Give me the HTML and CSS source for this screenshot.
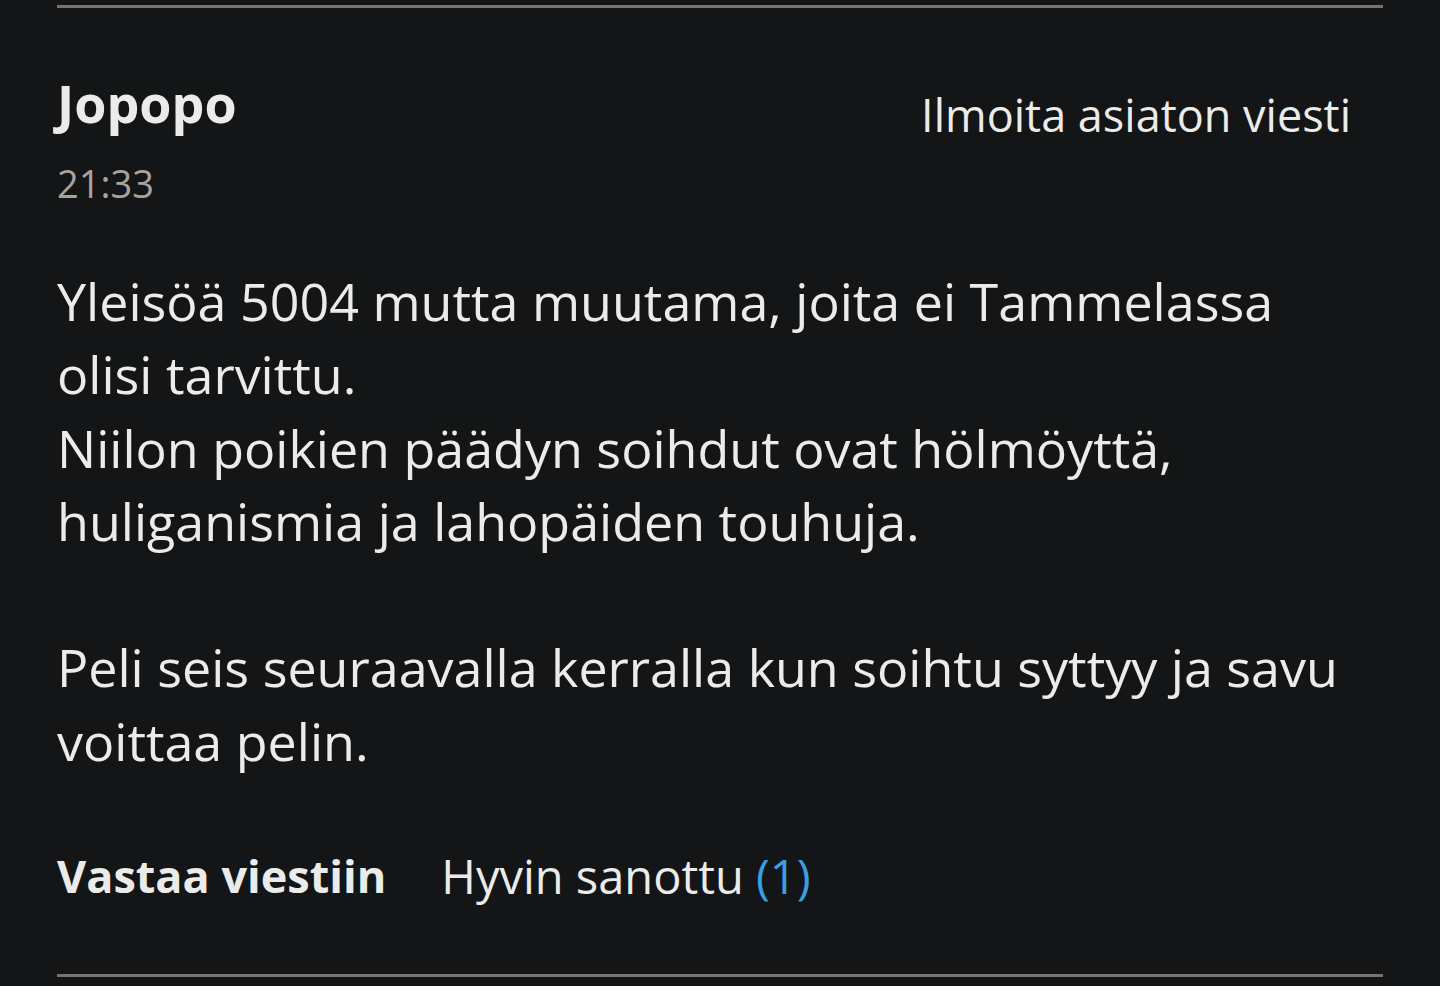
FILE: index.html
```html
<!DOCTYPE html>
<html lang="fi">
<head>
<meta charset="utf-8">
<link rel="stylesheet" href="styles.css">
</head>
<body>
<main class="page">
  <article class="comment">
    <header class="comment-head">
      <div class="author-block">
        <div class="author">Jopopo</div>
        <div class="time">21:33</div>
      </div>
      <a class="report" href="#">Ilmoita asiaton viesti</a>
    </header>
    <div class="comment-body">
      <p>Yleisöä 5004 mutta muutama, joita ei Tammelassa olisi tarvittu.<br>Niilon poikien päädyn soihdut ovat hölmöyttä, huliganismia ja lahopäiden touhuja.</p>
      <p>Peli seis seuraavalla kerralla kun soihtu syttyy ja savu voittaa pelin.</p>
    </div>
    <footer class="comment-actions">
      <a class="reply" href="#">Vastaa viestiin</a>
      <a class="like" href="#">Hyvin sanottu <span class="count">(1)</span></a>
    </footer>
  </article>
</main>
</body>
</html>
```
FILE: styles.css
```css
html, body {
  margin: 0;
  padding: 0;
  background: #131517;
}
body {
  font-family: "Open Sans", "Liberation Sans", sans-serif;
  font-variant-ligatures: none;
  color: #ebebe9;
  height: 986px;
  overflow: hidden;
}
.page {
  padding: 0 57px;
}
.comment {
  border-top: 3px solid #7a726b;
  border-bottom: 3px solid #7a726b;
  margin-top: 5px;
  padding: 0;
}
.comment-head {
  display: flex;
  justify-content: space-between;
  align-items: flex-start;
  padding-top: 65px;
  padding-right: 32px;
}
.author {
  font-weight: 700;
  font-size: 52px;
  line-height: 60px;
}
.time {
  color: #a8a29b;
  font-size: 38px;
  line-height: 50px;
  margin-top: 25px;
}
.report {
  color: #ebebe9;
  text-decoration: none;
  font-size: 45px;
  line-height: 60px;
  margin-top: 12px;
}
.comment-body {
  font-size: 52px;
  line-height: 73.3px;
  margin-top: 56px;
  padding-right: 32px;
}
.comment-body p {
  margin: 0 0 73.3px;
}
.comment-body p:last-child {
  margin-bottom: 0;
}
.comment-actions {
  display: flex;
  gap: 55px;
  margin-top: 69px;
  padding-bottom: 68px;
  font-size: 47px;
  line-height: 60px;
}
.comment-actions a {
  color: #ebebe9;
  text-decoration: none;
}
.reply {
  font-weight: 700;
  font-size: 45px;
}
.count {
  color: #3a9ee0;
}
```
